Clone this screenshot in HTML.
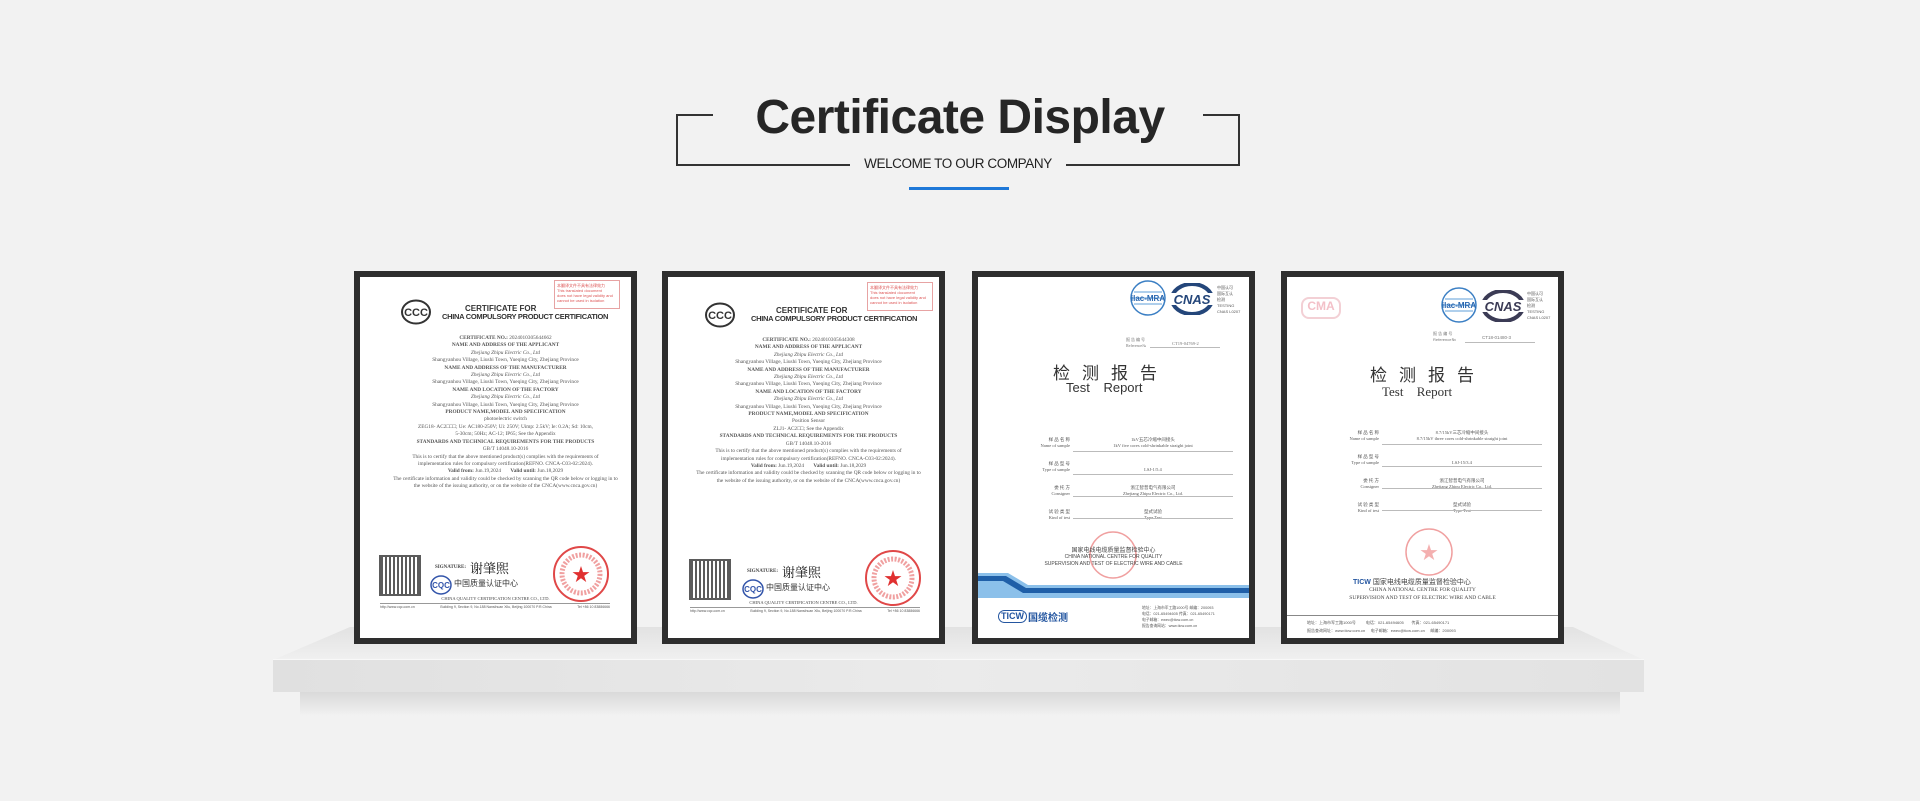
<!DOCTYPE html>
<html><head><meta charset="utf-8"><style>
*{margin:0;padding:0;box-sizing:border-box}
body{width:1920px;height:801px;background:#f2f2f2;position:relative;overflow:hidden;font-family:"Liberation Sans","Noto Sans CJK SC",sans-serif}
.abs{position:absolute}
.title{position:absolute;left:660px;width:600px;top:90px;text-align:center;font-weight:bold;font-size:48px;color:#262626;letter-spacing:-0.5px;font-family:"Liberation Sans",sans-serif;white-space:nowrap}
.sub{position:absolute;left:850px;width:216px;top:156px;text-align:center;font-size:13.5px;color:#222;letter-spacing:-0.4px;white-space:nowrap}
.frame{position:absolute;top:271px;width:283px;height:373px;background:#2e2e2e;padding:6px}
.paper{position:relative;width:100%;height:100%;background:#fff;overflow:hidden;color:#444}
.c{position:absolute;left:0;right:0;text-align:center;white-space:nowrap}
.t5{font-size:5px;line-height:7px;font-family:"Liberation Serif",serif}
.b{font-weight:bold}
.line{position:absolute;height:1px;background:#999}
</style></head><body>

<div class="title">Certificate Display</div>
<div class="abs" style="left:676px;top:114px;width:2px;height:52px;background:#333"></div>
<div class="abs" style="left:676px;top:114px;width:37px;height:2px;background:#333"></div>
<div class="abs" style="left:676px;top:164px;width:174px;height:2px;background:#333"></div>
<div class="abs" style="left:1238px;top:114px;width:2px;height:52px;background:#333"></div>
<div class="abs" style="left:1203px;top:114px;width:37px;height:2px;background:#333"></div>
<div class="abs" style="left:1066px;top:164px;width:174px;height:2px;background:#333"></div>
<div class="sub">WELCOME TO OUR COMPANY</div>
<div class="abs" style="left:909px;top:187px;width:100px;height:3px;background:#1e78d8"></div>

<!-- shelf -->
<div class="abs" style="left:273px;top:627px;width:1371px;height:33px;background:linear-gradient(#e2e2e2,#f0f0f0);clip-path:polygon(77px 0,1300px 0,1371px 100%,0 100%)"></div>
<div class="abs" style="left:273px;top:659px;width:1371px;height:33px;background:linear-gradient(90deg,#e0e0e0,#ebebeb 50%,#e2e2e2);border-top:1px solid #f8f8f8"></div>
<div class="abs" style="left:300px;top:692px;width:1320px;height:24px;background:linear-gradient(#d9d9d9,rgba(242,242,242,0))"></div>

<!-- cert 1 & 2 -->
<div class="frame" style="left:354px">
<div class="paper">
 <svg class="abs" style="left:40px;top:22px" width="32" height="26" viewBox="0 0 32 26"><ellipse cx="16" cy="13" rx="14" ry="11.5" fill="none" stroke="#333" stroke-width="2"/><text x="16" y="17" text-anchor="middle" font-size="11" font-weight="bold" fill="#333" font-family="Liberation Sans">CCC</text></svg>
 <div class="abs" style="left:194px;top:3px;width:66px;height:29px;border:1px solid #e7a3a3;font-size:4px;color:#d55;padding:2px;line-height:5px">本翻译文件不具有法律效力<br>This translated document<br>does not have legal validity and<br>cannot be used in isolation</div>
 <div class="c" style="left:105px;right:auto;top:27px;font-size:8px;color:#333;font-weight:bold">CERTIFICATE FOR</div>
 <div class="c" style="left:82px;right:auto;top:35px;font-size:7.5px;color:#333;font-weight:bold;letter-spacing:-0.3px">CHINA COMPULSORY PRODUCT CERTIFICATION</div>
 <div class="c t5" style="top:58px;left:20px;line-height:7.4px;font-size:5.3px;color:#555">
  <span class="b">CERTIFICATE NO.:</span> 2024010305644662<br>
  <span class="b">NAME AND ADDRESS OF THE APPLICANT</span><br>
  <i>Zhejiang Zhipu Electric Co., Ltd</i><br>
  Shangyanhou Village, Liushi Town, Yueqing City, Zhejiang Province<br>
  <span class="b">NAME AND ADDRESS OF THE MANUFACTURER</span><br>
  <i>Zhejiang Zhipu Electric Co., Ltd</i><br>
  Shangyanhou Village, Liushi Town, Yueqing City, Zhejiang Province<br>
  <span class="b">NAME AND LOCATION OF THE FACTORY</span><br>
  <i>Zhejiang Zhipu Electric Co., Ltd</i><br>
  Shangyanhou Village, Liushi Town, Yueqing City, Zhejiang Province<br>
  <span class="b">PRODUCT NAME,MODEL AND SPECIFICATION</span><br>
  photoelectric switch<br>
  ZEG18- AC2□□□; Ue: AC180-250V; Ui: 250V; Uimp: 2.5kV; Ie: 0.2A; Sd: 10cm,<br>
  5-30cm; 50Hz; AC-12; IP65; See the Appendix<br>
  <span class="b">STANDARDS AND TECHNICAL REQUIREMENTS FOR THE PRODUCTS</span><br>
  GB/T 14048.10-2016<br>
  This is to certify that the above mentioned product(s) complies with the requirements of<br>
  implementation rules for compulsory certification(REFNO. CNCA-C03-02:2024).<br>
  <span class="b">Valid from:</span> Jun.19,2024 &nbsp; &nbsp; &nbsp; <span class="b">Valid until:</span> Jun.18,2029<br>
  The certificate information and validity could be checked by scanning the QR code below or logging in to<br>
  the website of the issuing authority, or on the website of the CNCA(www.cnca.gov.cn)
 </div>
 <div class="abs" style="left:21px;top:280px;width:38px;height:37px;background:repeating-linear-gradient(90deg,#333 0 2px,#fff 2px 4px),#333;opacity:.8;outline:2px solid #333"></div>
 <div class="abs t5 b" style="left:75px;top:287px">SIGNATURE:</div>
 <div class="abs" style="left:110px;top:281px;font-size:13px;color:#222;font-family:'Noto Serif CJK SC',serif">谢肇煕</div>
 <svg class="abs" style="left:70px;top:298px" width="22" height="20"><ellipse cx="11" cy="10" rx="10" ry="9" fill="none" stroke="#35a" stroke-width="1.5"/><text x="11" y="13" text-anchor="middle" font-size="8" font-weight="bold" fill="#35a">CQC</text></svg>
 <div class="abs" style="left:94px;top:301px;font-size:8px;color:#333">中国质量认证中心</div>
 <svg class="abs" style="left:192px;top:268px" width="58" height="58"><circle cx="29" cy="29" r="27" fill="none" stroke="#e04848" stroke-width="2"/><circle cx="29" cy="29" r="19" fill="none" stroke="#f0a0a0" stroke-width="5" stroke-dasharray="2 1.5"/><text x="29" y="36" text-anchor="middle" font-size="18" fill="#e03030">★</text></svg>
 <div class="c t5" style="top:318px;font-size:4.5px">CHINA QUALITY CERTIFICATION CENTRE CO., LTD.</div>
 <div class="line" style="left:20px;width:230px;top:326px"></div>
 <div class="abs" style="left:20px;top:328px;font-size:3.5px;color:#555;width:230px;display:flex;justify-content:space-between"><span>http://www.cqc.com.cn</span><span>Building 9, Section 9, No.188 Nansihuan Xilu, Beijing 100070 P.R.China</span><span>Tel +86 10 83886666</span></div>
</div></div>

<div class="frame" style="left:662px">
<div class="paper">
 <svg class="abs" style="left:36px;top:25px" width="32" height="26" viewBox="0 0 32 26"><ellipse cx="16" cy="13" rx="14" ry="11.5" fill="none" stroke="#333" stroke-width="2"/><text x="16" y="17" text-anchor="middle" font-size="11" font-weight="bold" fill="#333" font-family="Liberation Sans">CCC</text></svg>
 <div class="abs" style="left:199px;top:5px;width:66px;height:29px;border:1px solid #e7a3a3;font-size:4px;color:#d55;padding:2px;line-height:5px">本翻译文件不具有法律效力<br>This translated document<br>does not have legal validity and<br>cannot be used in isolation</div>
 <div class="c" style="left:108px;right:auto;top:29px;font-size:8px;color:#333;font-weight:bold">CERTIFICATE FOR</div>
 <div class="c" style="left:83px;right:auto;top:37px;font-size:7.5px;color:#333;font-weight:bold;letter-spacing:-0.3px">CHINA COMPULSORY PRODUCT CERTIFICATION</div>
 <div class="c t5" style="top:60px;left:10px;line-height:7.4px;font-size:5.3px;color:#555">
  <span class="b">CERTIFICATE NO.:</span> 2024010305644308<br>
  <span class="b">NAME AND ADDRESS OF THE APPLICANT</span><br>
  <i>Zhejiang Zhipu Electric Co., Ltd</i><br>
  Shangyanhou Village, Liushi Town, Yueqing City, Zhejiang Province<br>
  <span class="b">NAME AND ADDRESS OF THE MANUFACTURER</span><br>
  <i>Zhejiang Zhipu Electric Co., Ltd</i><br>
  Shangyanhou Village, Liushi Town, Yueqing City, Zhejiang Province<br>
  <span class="b">NAME AND LOCATION OF THE FACTORY</span><br>
  <i>Zhejiang Zhipu Electric Co., Ltd</i><br>
  Shangyanhou Village, Liushi Town, Yueqing City, Zhejiang Province<br>
  <span class="b">PRODUCT NAME,MODEL AND SPECIFICATION</span><br>
  Position Sensor<br>
  ZLJ1- AC2□□; See the Appendix<br>
  <span class="b">STANDARDS AND TECHNICAL REQUIREMENTS FOR THE PRODUCTS</span><br>
  GB/T 14048.10-2016<br>
  This is to certify that the above mentioned product(s) complies with the requirements of<br>
  implementation rules for compulsory certification(REFNO. CNCA-C03-02:2024).<br>
  <span class="b">Valid from:</span> Jun.19,2024 &nbsp; &nbsp; &nbsp; <span class="b">Valid until:</span> Jun.18,2029<br>
  The certificate information and validity could be checked by scanning the QR code below or logging in to<br>
  the website of the issuing authority, or on the website of the CNCA(www.cnca.gov.cn)
 </div>
 <div class="abs" style="left:23px;top:284px;width:38px;height:37px;background:repeating-linear-gradient(90deg,#333 0 2px,#fff 2px 4px),#333;opacity:.8;outline:2px solid #333"></div>
 <div class="abs t5 b" style="left:79px;top:291px">SIGNATURE:</div>
 <div class="abs" style="left:114px;top:285px;font-size:13px;color:#222;font-family:'Noto Serif CJK SC',serif">谢肇煕</div>
 <svg class="abs" style="left:74px;top:302px" width="22" height="20"><ellipse cx="11" cy="10" rx="10" ry="9" fill="none" stroke="#35a" stroke-width="1.5"/><text x="11" y="13" text-anchor="middle" font-size="8" font-weight="bold" fill="#35a">CQC</text></svg>
 <div class="abs" style="left:98px;top:305px;font-size:8px;color:#333">中国质量认证中心</div>
 <svg class="abs" style="left:196px;top:272px" width="58" height="58"><circle cx="29" cy="29" r="27" fill="none" stroke="#e04848" stroke-width="2"/><circle cx="29" cy="29" r="19" fill="none" stroke="#f0a0a0" stroke-width="5" stroke-dasharray="2 1.5"/><text x="29" y="36" text-anchor="middle" font-size="18" fill="#e03030">★</text></svg>
 <div class="c t5" style="top:322px;font-size:4.5px">CHINA QUALITY CERTIFICATION CENTRE CO., LTD.</div>
 <div class="line" style="left:22px;width:230px;top:330px"></div>
 <div class="abs" style="left:22px;top:332px;font-size:3.5px;color:#555;width:230px;display:flex;justify-content:space-between"><span>http://www.cqc.com.cn</span><span>Building 9, Section 9, No.188 Nansihuan Xilu, Beijing 100070 P.R.China</span><span>Tel +86 10 83886666</span></div>
</div></div>

<!-- cert 3 -->
<div class="frame" style="left:972px">
<div class="paper">
 <svg class="abs" style="left:150px;top:3px" width="40" height="36"><circle cx="20" cy="18" r="17" fill="#fff" stroke="#3b7fc4" stroke-width="1.5"/><path d="M6 12h28M4 18h32M6 24h28" stroke="#7fb2e0" stroke-width="1.2"/><text x="20" y="21" text-anchor="middle" font-size="8" font-weight="bold" fill="#2a67b0">ilac-MRA</text></svg>
 <svg class="abs" style="left:192px;top:6px" width="44" height="32"><ellipse cx="22" cy="16" rx="20" ry="15" fill="none" stroke="#24467a" stroke-width="4"/><rect x="0" y="10" width="44" height="12" fill="#fff"/><text x="22" y="21" text-anchor="middle" font-size="13" font-style="italic" font-weight="bold" fill="#24467a">CNAS</text></svg>
 <div class="abs" style="left:239px;top:8px;font-size:4px;line-height:6px;color:#555">中国认可<br>国际互认<br>检测<br>TESTING<br>CNAS L0207</div>
 <div class="abs t5" style="left:148px;top:60px;font-size:4px;line-height:6px;color:#777">报 告 编 号<br>Reference№</div>
 <div class="abs t5" style="left:194px;top:63px;font-size:4.5px;color:#777">CT19-04769-2</div>
 <div class="line" style="left:172px;width:70px;top:70px;background:#bbb"></div>
 <div class="abs" style="left:75px;top:82px;font-size:17px;letter-spacing:12px;color:#333">检测报告</div>
 <div class="abs" style="left:88px;top:103px;font-size:13px;word-spacing:10px;color:#333">Test Report</div>
 <div class="abs t5" style="left:34px;top:160px;font-size:4.5px;line-height:6px;color:#555;text-align:right;width:58px">样 品 名 称<br>Name of sample<br><br><br>样 品 型 号<br>Type of sample<br><br><br>委 托 方<br>Consigner<br><br><br>试 验 类 型<br>Kind of test</div>
 <div class="abs t5" style="left:95px;top:160px;width:160px;text-align:center;font-size:4.5px;line-height:6px;color:#555">1kV五芯冷缩中间接头<br>1kV five cores cold-shrinkable straight joint<br><br><br><br>LSJ-1/5.4<br><br><br>浙江智普电气有限公司<br>Zhejiang Zhipu Electric Co., Ltd.<br><br><br>型式试验<br>Type Test</div>
 <div class="line" style="left:95px;width:160px;top:174px;background:#bbb"></div>
 <div class="line" style="left:95px;width:160px;top:197px;background:#bbb"></div>
 <div class="line" style="left:95px;width:160px;top:219px;background:#bbb"></div>
 <div class="line" style="left:95px;width:160px;top:241px;background:#bbb"></div>
 <svg class="abs" style="left:110px;top:253px" width="50" height="50"><circle cx="25" cy="25" r="23" fill="none" stroke="#f0a0a0" stroke-width="1.5"/></svg>
 <div class="c" style="top:268px;font-size:6px;color:#444">国家电线电缆质量监督检验中心</div>
 <div class="c" style="top:277px;font-size:5px;color:#444">CHINA NATIONAL CENTRE FOR QUALITY</div>
 <div class="c" style="top:284px;font-size:5px;color:#444">SUPERVISION AND TEST OF ELECTRIC WIRE AND CABLE</div>
 <svg class="abs" style="left:0;top:296px" width="271" height="26"><path d="M0 0h30l20 12h221v13H0z" fill="#8bc0ea"/><path d="M0 3h28l20 12h223v5H45L25 8H0z" fill="#1f5fa8"/></svg>
 <div class="abs" style="left:20px;top:333px;font-size:9px;font-weight:bold;color:#2456a0;border:1.5px solid #2456a0;border-radius:8px;padding:0 2px;line-height:11px">TICW</div>
 <div class="abs" style="left:50px;top:332px;font-size:10px;font-weight:bold;color:#2456a0">国缆检测</div>
 <div class="abs" style="left:164px;top:328px;font-size:3.8px;line-height:6px;color:#555">地址：上海市军工路1000号 邮编：200093<br>电话：021-65494605 传真：021-65490171<br>电子邮箱：ewec@ticw.com.cn<br>报告查询网站：www.ticw.com.cn</div>
</div></div>

<!-- cert 4 -->
<div class="frame" style="left:1281px">
<div class="paper">
 <svg class="abs" style="left:152px;top:10px" width="40" height="36"><circle cx="20" cy="18" r="17" fill="#fff" stroke="#3b7fc4" stroke-width="1.5"/><path d="M6 12h28M4 18h32M6 24h28" stroke="#7fb2e0" stroke-width="1.2"/><text x="20" y="21" text-anchor="middle" font-size="8" font-weight="bold" fill="#2a67b0">ilac-MRA</text></svg>
 <svg class="abs" style="left:194px;top:13px" width="44" height="32"><ellipse cx="22" cy="16" rx="20" ry="15" fill="none" stroke="#3b3b55" stroke-width="4"/><rect x="0" y="10" width="44" height="12" fill="#fff"/><text x="22" y="21" text-anchor="middle" font-size="13" font-style="italic" font-weight="bold" fill="#3b3b55">CNAS</text></svg>
 <div class="abs" style="left:240px;top:14px;font-size:4px;line-height:6px;color:#555">中国认可<br>国际互认<br>检测<br>TESTING<br>CNAS L0207</div>
 <div class="abs" style="left:14px;top:20px;width:40px;height:22px;border:2px solid #f3d0d5;border-radius:8px;color:#f3c0c8;font-size:12px;text-align:center;font-weight:bold">CMA</div>
 <div class="abs" style="left:146px;top:54px;font-size:4px;line-height:6px;color:#777">报 告 编 号<br>Reference№</div>
 <div class="abs" style="left:195px;top:58px;font-size:4.5px;color:#777">CT18-01480-3</div>
 <div class="line" style="left:178px;width:70px;top:65px;background:#bbb"></div>
 <div class="abs" style="left:83px;top:84px;font-size:17px;letter-spacing:12px;color:#333">检测报告</div>
 <div class="abs" style="left:95px;top:107px;font-size:13px;word-spacing:10px;color:#333;font-family:'Liberation Serif',serif">Test Report</div>
 <div class="abs t5" style="left:34px;top:153px;font-size:4.5px;line-height:6px;color:#555;text-align:right;width:58px">样 品 名 称<br>Name of sample<br><br><br>样 品 型 号<br>Type of sample<br><br><br>委 托 方<br>Consigner<br><br><br>试 验 类 型<br>Kind of test</div>
 <div class="abs t5" style="left:95px;top:153px;width:160px;text-align:center;font-size:4.5px;line-height:6px;color:#555">8.7/15kV三芯冷缩中间接头<br>8.7/15kV three cores cold-shrinkable straight joint<br><br><br><br>LSJ-15/3.4<br><br><br>浙江智普电气有限公司<br>Zhejiang Zhipu Electric Co., Ltd.<br><br><br>型式试验<br>Type Test</div>
 <div class="line" style="left:95px;width:160px;top:167px;background:#bbb"></div>
 <div class="line" style="left:95px;width:160px;top:189px;background:#bbb"></div>
 <div class="line" style="left:95px;width:160px;top:211px;background:#bbb"></div>
 <div class="line" style="left:95px;width:160px;top:233px;background:#bbb"></div>
 <svg class="abs" style="left:117px;top:250px" width="50" height="50"><circle cx="25" cy="25" r="23" fill="none" stroke="#f0a0a0" stroke-width="1.5"/><text x="25" y="32" text-anchor="middle" font-size="18" fill="#f4b0b0">★</text></svg>
 <div class="abs" style="left:66px;top:300px;font-size:7px;color:#444;white-space:nowrap"><b style="color:#2456a0">TICW</b> 国家电线电缆质量监督检验中心</div>
 <div class="c" style="top:310px;font-size:5.5px;color:#444;font-family:'Liberation Serif',serif">CHINA NATIONAL CENTRE FOR QUALITY</div>
 <div class="c" style="top:318px;font-size:5.5px;color:#444;font-family:'Liberation Serif',serif">SUPERVISION AND TEST OF ELECTRIC WIRE AND CABLE</div>
 <div class="line" style="left:0;width:271px;top:338px;background:#888"></div>
 <div class="abs" style="left:20px;top:342px;font-size:4px;line-height:8px;color:#555;white-space:nowrap">地址：上海市军工路1000号 &nbsp; &nbsp; &nbsp; &nbsp; 电话：021-65494605 &nbsp; &nbsp; &nbsp; 传真：021-65490171<br>报告查询网址：www.ticw.com.cn &nbsp; &nbsp; 电子邮箱：ewec@ticw.com.cn &nbsp; &nbsp; 邮编：200093</div>
</div></div>

</body></html>
